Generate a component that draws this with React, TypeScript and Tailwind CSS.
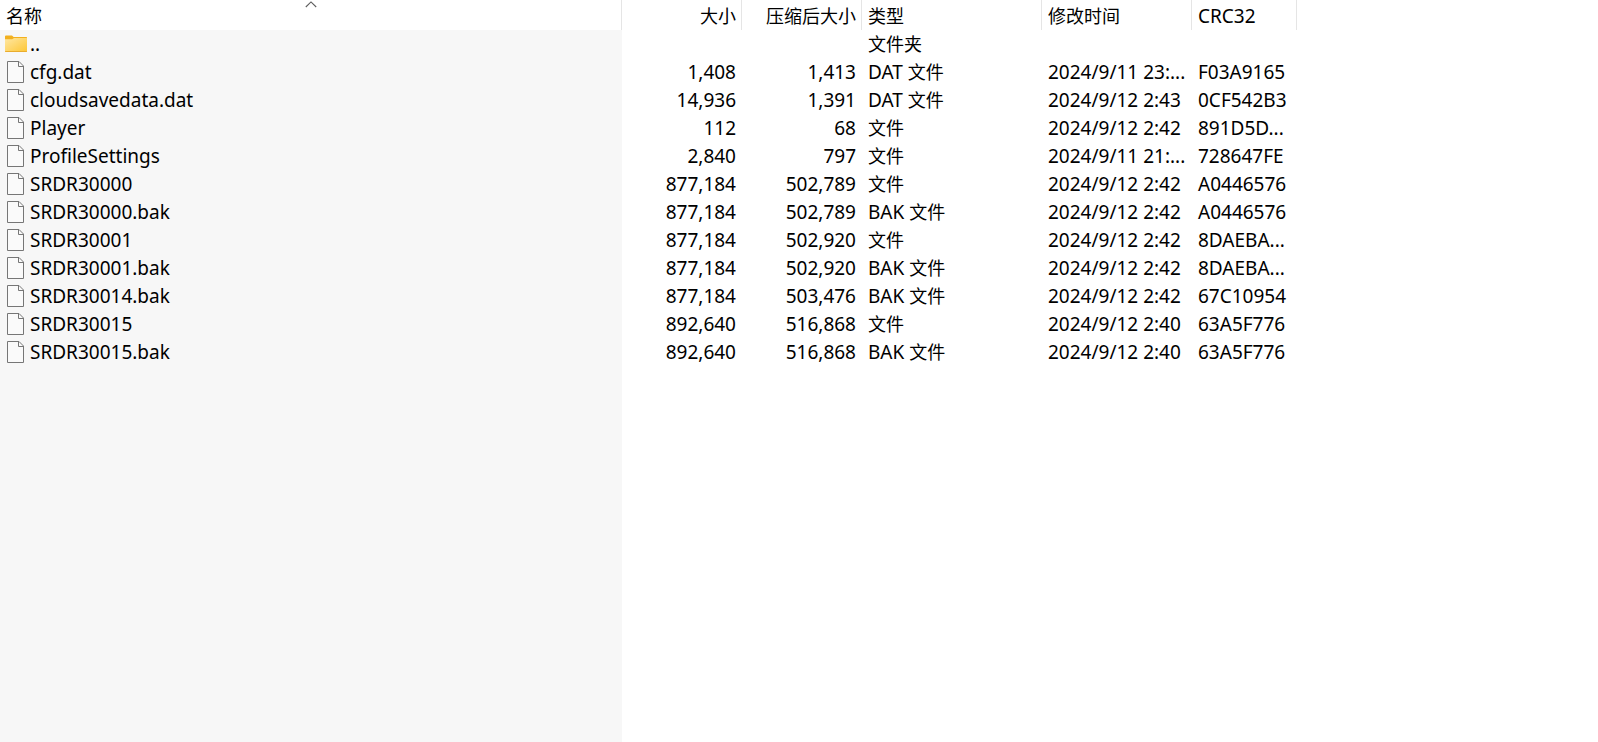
import React from 'react';

type Entry = {
  name: string;
  size: string;
  packed: string;
  ext: string;
  kind: string;
  modified: string;
  crc: string;
  folder?: boolean;
};

const entries: Entry[] = [
  { name: '..', size: '', packed: '', ext: '', kind: '文件夹', modified: '', crc: '', folder: true },
  { name: 'cfg.dat', size: '1,408', packed: '1,413', ext: 'DAT', kind: '文件', modified: '2024/9/11 23:...', crc: 'F03A9165' },
  { name: 'cloudsavedata.dat', size: '14,936', packed: '1,391', ext: 'DAT', kind: '文件', modified: '2024/9/12 2:43', crc: '0CF542B3' },
  { name: 'Player', size: '112', packed: '68', ext: '', kind: '文件', modified: '2024/9/12 2:42', crc: '891D5D...' },
  { name: 'ProfileSettings', size: '2,840', packed: '797', ext: '', kind: '文件', modified: '2024/9/11 21:...', crc: '728647FE' },
  { name: 'SRDR30000', size: '877,184', packed: '502,789', ext: '', kind: '文件', modified: '2024/9/12 2:42', crc: 'A0446576' },
  { name: 'SRDR30000.bak', size: '877,184', packed: '502,789', ext: 'BAK', kind: '文件', modified: '2024/9/12 2:42', crc: 'A0446576' },
  { name: 'SRDR30001', size: '877,184', packed: '502,920', ext: '', kind: '文件', modified: '2024/9/12 2:42', crc: '8DAEBA...' },
  { name: 'SRDR30001.bak', size: '877,184', packed: '502,920', ext: 'BAK', kind: '文件', modified: '2024/9/12 2:42', crc: '8DAEBA...' },
  { name: 'SRDR30014.bak', size: '877,184', packed: '503,476', ext: 'BAK', kind: '文件', modified: '2024/9/12 2:42', crc: '67C10954' },
  { name: 'SRDR30015', size: '892,640', packed: '516,868', ext: '', kind: '文件', modified: '2024/9/12 2:40', crc: '63A5F776' },
  { name: 'SRDR30015.bak', size: '892,640', packed: '516,868', ext: 'BAK', kind: '文件', modified: '2024/9/12 2:40', crc: '63A5F776' },
];

const headers = [
  { label: '名称', align: 'text-left', size: 'text-[18px]' },
  { label: '大小', align: 'text-right', size: 'text-[18px]' },
  { label: '压缩后大小', align: 'text-right', size: 'text-[18px]' },
  { label: '类型', align: 'text-left', size: 'text-[18px]' },
  { label: '修改时间', align: 'text-left', size: 'text-[18px]' },
  { label: 'CRC32', align: 'text-left', size: 'text-[19px]' },
];

function FolderIcon() {
  return (
    <svg width="22" height="18" viewBox="0 0 22 18" aria-hidden="true" className="shrink-0">
      <defs>
        <linearGradient id="folderFront" x1="0" y1="0" x2="1" y2="1">
          <stop offset="0" stopColor="#ffe7a3" />
          <stop offset="1" stopColor="#fdc634" />
        </linearGradient>
      </defs>
      <path d="M0 1.6Q0 .4 1 .4H7L8.6 2H21.4Q22 2 22 2.6V6H0Z" fill="#f2b01f" />
      <path d="M0 4.2H7.2L9 3H22V16.3Q22 17 21.3 17H.7Q0 17 0 16.3Z" fill="url(#folderFront)" />
      <path d="M0 16V16.3Q0 17.1 .8 17.1H21.2Q22 17.1 22 16.3V16Z" fill="#e9ac2e" />
    </svg>
  );
}

function FileIcon() {
  return (
    <svg width="18" height="22" viewBox="0 0 18 22" aria-hidden="true" className="ml-0.5 mr-0.5 shrink-0">
      <path d="M.5.5H12L16.5 5V21.5H.5Z" fill="#fafafa" stroke="#767676" />
      <path d="M11.5.5V5.5H16.5" fill="none" stroke="#767676" />
    </svg>
  );
}

export default function App() {
  return (
    <table className="h-screen w-full table-fixed border-separate border-spacing-0 bg-white font-['Noto_Sans','Noto_Sans_CJK_SC',sans-serif] text-[19px] leading-7 whitespace-nowrap text-black">
      <colgroup>
        <col className="w-[622px]" />
        <col className="w-[120px]" />
        <col className="w-[120px]" />
        <col className="w-[180px]" />
        <col className="w-[150px]" />
        <col className="w-[105px]" />
        <col />
      </colgroup>
      <thead>
        <tr className="h-[30px]">
          {headers.map((h, i) => (
            <th
              key={h.label}
              scope="col"
              aria-sort={i === 0 ? 'ascending' : undefined}
              className="relative border-r border-[#e5e5e5] px-0 pt-0.5 pb-0 font-normal"
            >
              <button type="button" className={`block w-full pr-[5px] pl-1.5 ${h.align} ${h.size}`}>
                {h.label}
              </button>
              {i === 0 && (
                <svg width="12" height="7" viewBox="0 0 12 7" aria-hidden="true" className="absolute top-px left-1/2 -translate-x-1/2">
                  <path d="M.8 6L6 .9L11.2 6" fill="none" stroke="#5c5c5c" strokeWidth="1.1" />
                </svg>
              )}
            </th>
          ))}
          <td className="p-0" />
        </tr>
      </thead>
      <tbody>
        {entries.map((e) => (
          <tr key={e.name} className="h-7">
            <td className="bg-[#f7f7f7] p-0">
              <div className="flex h-7 items-center gap-[3px] pl-[5px]">
                {e.folder ? <FolderIcon /> : <FileIcon />}
                <span>{e.name}</span>
              </div>
            </td>
            <td className="px-1.5 py-0 text-right">{e.size}</td>
            <td className="px-1.5 py-0 text-right">{e.packed}</td>
            <td className="px-1.5 py-0">
              {e.ext && `${e.ext} `}
              <span className="text-[18px]">{e.kind}</span>
            </td>
            <td className="px-1.5 py-0">{e.modified}</td>
            <td className="px-1.5 py-0">{e.crc}</td>
            <td className="p-0" />
          </tr>
        ))}
        <tr className="h-full" aria-hidden="true">
          <td className="bg-[#f7f7f7] p-0" />
          <td className="p-0" colSpan={6} />
        </tr>
      </tbody>
    </table>
  );
}
